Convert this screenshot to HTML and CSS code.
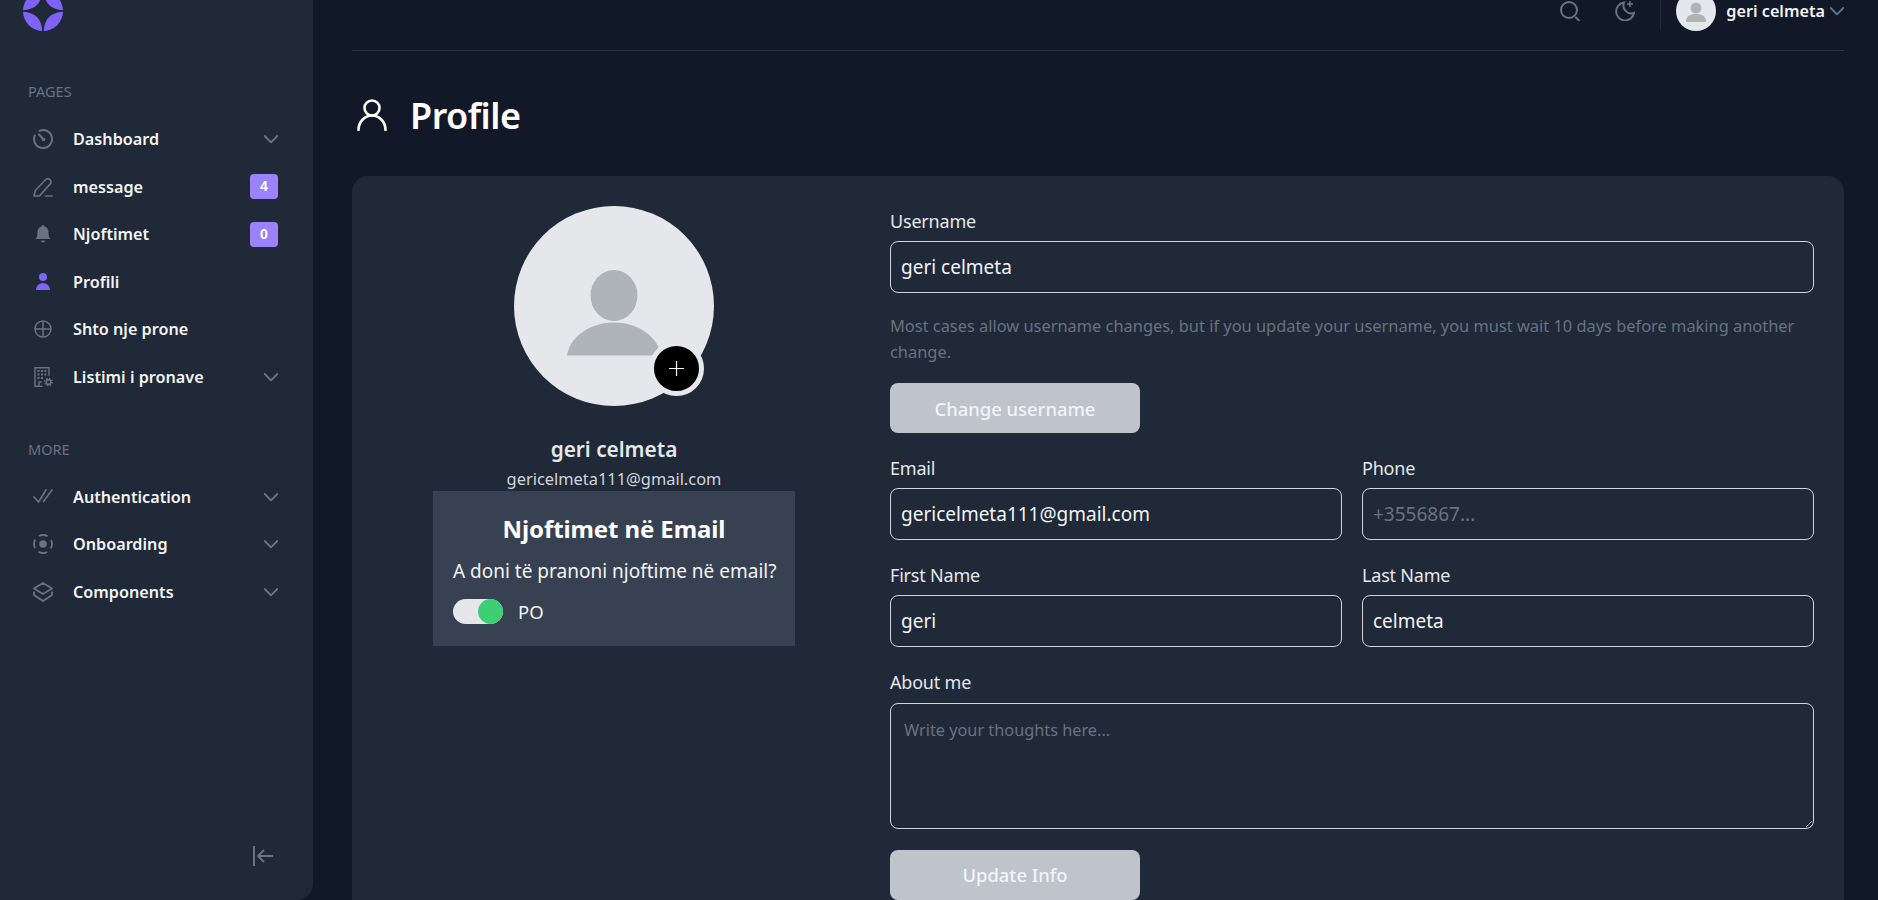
FILE: index.html
```html
<!DOCTYPE html>
<html lang="en">
<head>
    <meta charset="UTF-8">
    <meta name="viewport" content="width=device-width, initial-scale=1.0">
    <title>Profile</title>
    <link rel="stylesheet" href="styles.css">
</head>
<body>
<div class="app">
    <aside class="sidebar">
        <svg class="logo" viewBox="0 0 40 40">
            <circle cx="20" cy="20" r="20" fill="#7f62f6"/>
            <path d="M20 0C19 13 13 19 0 20C13 21 19 27 20 40C21 27 27 21 40 20C27 19 21 13 20 0Z" fill="#1f2937" stroke="#1f2937" stroke-width="1.5"/>
        </svg>

        <div class="nav-title first">PAGES</div>
        <a class="nav-item">
            <svg class="nav-icon" viewBox="0 0 20 20" fill="none" stroke="currentColor" stroke-width="2" stroke-linecap="round"><path d="M6.500 1.800A9 9 0 1 1 1.800 6.500"/><path d="M6 5.500l4.500 5"/><circle cx="10.500" cy="10.500" r="1.800" fill="currentColor" stroke="none"/></svg>
            <span class="nav-text">Dashboard</span>
            <svg class="chevron" viewBox="0 0 14 14"><path d="M.7 4L7 10.300 13.300 4"/></svg>
        </a>
        <a class="nav-item">
            <svg class="nav-icon" viewBox="0 0 20 20" fill="none" stroke="currentColor" stroke-width="1.600" stroke-linecap="round" stroke-linejoin="round"><path d="M1 19l1.300-5.500L12.800 2.500a2.800 2.800 0 0 1 4 0l.4.4a2.800 2.800 0 0 1 0 4L6.500 19z"/><path d="M12.500 19h6.500"/></svg>
            <span class="nav-text">message</span>
            <span class="badge">4</span>
        </a>
        <a class="nav-item">
            <svg class="nav-icon" viewBox="0 0 20 20" fill="currentColor"><path d="M10 1a1.400 1.400 0 0 1 1.400 1.500C14 3.200 15.500 5.500 15.500 8.300c0 4 .9 5.700 1.900 6.700H2.600c1-1 1.900-2.700 1.900-6.700C4.500 5.500 6 3.200 8.600 2.500A1.400 1.400 0 0 1 10 1z"/><path d="M8 16.500h4a2 2 0 0 1-4 0z"/></svg>
            <span class="nav-text">Njoftimet</span>
            <span class="badge">0</span>
        </a>
        <a class="nav-item">
            <svg class="nav-icon purple" viewBox="0 0 20 20" fill="currentColor"><circle cx="10" cy="5" r="4"/><path d="M3 18c0-4 3-7 7-7s7 3 7 7z"/></svg>
            <span class="nav-text">Profili</span>
        </a>
        <a class="nav-item">
            <svg class="nav-icon" viewBox="0 0 20 20" fill="none" stroke="currentColor" stroke-width="1.500"><circle cx="10" cy="10" r="8"/><path d="M10 2v16M2 10h16"/></svg>
            <span class="nav-text">Shto nje prone</span>
        </a>
        <a class="nav-item">
            <svg class="nav-icon" viewBox="0 0 20 20" fill="none" stroke="currentColor" stroke-width="1.400"><path d="M9.500 19.300H2V.7h14v8"/><path d="M6 19v-4h3" /><path d="M4.500 4h2M8 4h2M11.500 4h2M4.500 7.500h2M8 7.500h2M11.500 7.500h2M4.500 11h2M8 11h2" stroke-width="2.200"/><circle cx="15.500" cy="15" r="2.400" stroke-width="1.600"/><circle cx="15.500" cy="15" r="3.800" stroke-width="1.200" stroke-dasharray="1.500 1.480"/></svg>
            <span class="nav-text">Listimi i pronave</span>
            <svg class="chevron" viewBox="0 0 14 14"><path d="M.7 4L7 10.300 13.300 4"/></svg>
        </a>

        <div class="nav-title">MORE</div>
        <a class="nav-item">
            <svg class="nav-icon" viewBox="0 0 20 20" fill="none" stroke="currentColor" stroke-width="1.700" stroke-linecap="round" stroke-linejoin="round"><path d="M1 10l4.500 5L13 3"/><path d="M10.500 14.500L19 3"/></svg>
            <span class="nav-text">Authentication</span>
            <svg class="chevron" viewBox="0 0 14 14"><path d="M.7 4L7 10.300 13.300 4"/></svg>
        </a>
        <a class="nav-item">
            <svg class="nav-icon" viewBox="0 0 20 20" fill="none" stroke="currentColor" stroke-width="1.800"><circle cx="10" cy="10" r="3.800" fill="currentColor" stroke="none"/><circle cx="10" cy="10" r="9" stroke-dasharray="9 5.140" stroke-dashoffset="4.500"/></svg>
            <span class="nav-text">Onboarding</span>
            <svg class="chevron" viewBox="0 0 14 14"><path d="M.7 4L7 10.300 13.300 4"/></svg>
        </a>
        <a class="nav-item">
            <svg class="nav-icon" viewBox="0 0 20 20" fill="none" stroke="currentColor" stroke-width="1.800" stroke-linejoin="round"><path d="M10 1l9 5.500-9 5.500-9-5.500z"/><path d="M1 9.500v3.500l9 6 9-6V9.500" /></svg>
            <span class="nav-text">Components</span>
            <svg class="chevron" viewBox="0 0 14 14"><path d="M.7 4L7 10.300 13.300 4"/></svg>
        </a>

        <svg class="collapse" viewBox="0 0 20 20" fill="none" stroke="currentColor" stroke-width="2"><path d="M1 0v20"/><path d="M20 10H6M11 4l-6 6 6 6"/></svg>
    </aside>

    <main class="main">
        <header class="topbar">
            <svg class="top-icon" viewBox="0 0 20 20" fill="none" stroke="currentColor" stroke-width="2" stroke-linecap="round"><circle cx="9" cy="9" r="8"/><path d="M16 16.500l3 3"/></svg>
            <svg class="top-icon moon" viewBox="0 0 20 20" fill="none" stroke="currentColor" stroke-width="2"><path d="M9 1.500A9 9 0 1 0 19 12 8 8 0 0 1 9 1.500z"/><path d="M15 0v6M12 3h6" stroke-width="1.500"/></svg>
            <span class="top-divider"></span>
            <span class="top-avatar">
                <svg viewBox="0 0 40 40"><circle cx="20" cy="17" r="5.500" fill="#afb4b8"/><path d="M10 31c0-6 4-8 10-8s10 2 10 8z" fill="#afb4b8"/></svg>
            </span>
            <span class="top-name">geri celmeta</span>
            <svg class="chevron top-chevron" viewBox="0 0 14 14"><path d="M.7 4L7 10.300 13.300 4"/></svg>
        </header>

        <div class="page-title">
            <svg viewBox="0 0 30 32" fill="none" stroke="#fff" stroke-width="2.600" stroke-linecap="round"><circle cx="15" cy="9" r="7.500"/><path d="M1.500 31c0-8 6-14.500 13.500-14.500S28.500 23 28.500 31"/></svg>
            <h1>Profile</h1>
        </div>

        <section class="card">
            <div class="left-col">
                <div class="avatar">
                    <svg class="avatar-person" viewBox="0 0 94 86"><ellipse cx="47" cy="25.500" rx="23.500" ry="25.500" fill="#afb4b8"/><path d="M0 85.500C3 66 24 52.500 47 52.500S91 66 94 85.500z" fill="#afb4b8"/></svg>
                    <button class="avatar-add" type="button">
                        <svg viewBox="0 0 16 16" fill="none" stroke="#fff" stroke-width="1.300"><path d="M8 0v16M0 8h16"/></svg>
                    </button>
                </div>
                <h2 class="user-name">geri celmeta</h2>
                <p class="user-mail">gericelmeta111@gmail.com</p>
                <div class="notify-box">
                    <h3>Njoftimet në Email</h3>
                    <p>A doni të pranoni njoftime në email?</p>
                    <div class="toggle-row">
                        <span class="toggle"><span class="toggle-thumb"></span></span>
                        <span>PO</span>
                    </div>
                </div>
            </div>

            <form class="right-col">
                <label for="username">Username</label>
                <input type="text" id="username" value="geri celmeta">
                <p class="hint">Most cases allow username changes, but if you update your username, you must wait 10 days before making another change.</p>
                <button class="soft-btn" type="button">Change username</button>

                <div class="two-col row-email">
                    <div>
                        <label for="email">Email</label>
                        <input type="text" id="email" value="gericelmeta111@gmail.com">
                    </div>
                    <div>
                        <label for="phone">Phone</label>
                        <input type="text" id="phone" placeholder="+3556867...">
                    </div>
                </div>
                <div class="two-col row-name">
                    <div>
                        <label for="first">First Name</label>
                        <input type="text" id="first" value="geri">
                    </div>
                    <div>
                        <label for="last">Last Name</label>
                        <input type="text" id="last" value="celmeta">
                    </div>
                </div>

                <label class="about-label" for="about">About me</label>
                <textarea id="about" placeholder="Write your thoughts here..."></textarea>
                <button class="soft-btn update-btn" type="button">Update Info</button>
            </form>
        </section>
    </main>
</div>
</body>
</html>
```

FILE: styles.css
```css
* {
    box-sizing: border-box;
}

html, body {
    margin: 0;
    height: 100%;
    overflow: hidden;
}

body {
    background-color: #111827;
    color: #e5e7eb;
    font-family: "Noto Sans", Arial, sans-serif;
    font-size: 16px;
}

h1, h2, h3, p {
    margin: 0;
}

.app {
    display: flex;
    height: 900px;
    overflow: hidden;
}

/* sidebar */
.sidebar {
    display: flex;
    flex-direction: column;
    flex: 0 0 313px;
    height: 909px;
    margin-top: -9px;
    padding: 0 35px 34px 28px;
    background-color: #1f2937;
    border-bottom-right-radius: 16px;
}

.logo {
    flex: none;
    width: 40px;
    height: 40px;
    margin-left: -5px;
}

.nav-title {
    height: 20px;
    margin: 37.7px 0 14.3px;
    color: #6b7280;
    font-size: 14.5px;
    line-height: 20px;
}

.nav-title.first {
    margin-top: 50px;
}

.nav-item {
    display: flex;
    align-items: center;
    flex: none;
    height: 47.6px;
    padding-left: 5px;
    color: #f3f4f6;
    font-size: 16.2px;
    font-weight: 600;
    line-height: 24px;
}

.nav-icon {
    flex: none;
    width: 20px;
    height: 20px;
    color: #6b7280;
}

.nav-icon.purple {
    color: #7f62f6;
}

.nav-text {
    margin-left: 20px;
}

.chevron {
    flex: none;
    width: 14px;
    height: 14px;
    margin-left: auto;
    fill: none;
    stroke: #6b7280;
    stroke-width: 1.9;
    stroke-linecap: round;
    stroke-linejoin: round;
}

.badge {
    margin-left: auto;
    min-width: 28px;
    height: 25px;
    border-radius: 4px;
    background-color: #9a82fb;
    color: #fff;
    font-family: "Liberation Sans", Arial, sans-serif;
    font-size: 14px;
    font-weight: 700;
    line-height: 25px;
    text-align: center;
}

.collapse {
    flex: none;
    align-self: flex-end;
    width: 20px;
    height: 20px;
    margin: auto 5px 0 0;
    color: #6b7280;
}

/* top bar */
.main {
    flex: 1;
    min-width: 0;
    padding: 0 34px 0 39px;
}

.topbar {
    display: flex;
    align-items: center;
    height: 60px;
    margin-top: -9px;
    padding-bottom: 19px;
    border-bottom: 1px solid #2a3442;
}

.top-icon {
    flex: none;
    width: 20px;
    height: 20px;
    margin-left: auto;
    color: #6b7280;
}

.top-icon.moon {
    margin-left: 35px;
}

.top-divider {
    flex: none;
    width: 1px;
    height: 35px;
    margin: 0 15px 0 25px;
    background-color: #1f2937;
}

.top-avatar {
    flex: none;
    width: 40px;
    height: 40px;
    border-radius: 50%;
    background-color: #e5e7eb;
}

.top-avatar svg {
    display: block;
    width: 40px;
    height: 40px;
}

.top-name {
    margin-left: 10px;
    color: #f3f4f6;
    font-size: 16.2px;
    font-weight: 600;
}

.top-chevron {
    margin-left: 5px;
}

.page-title {
    display: flex;
    align-items: center;
    height: 70px;
    margin: 29px 0 26px;
    padding-left: 5px;
}

.page-title svg {
    width: 30px;
    height: 32px;
}

.page-title h1 {
    margin-left: 23px;
    color: #fff;
    font-size: 36px;
    font-weight: 600;
    letter-spacing: -0.5px;
}

/* card */
.card {
    display: grid;
    grid-template-columns: 462px 1fr;
    column-gap: 45px;
    min-height: 800px;
    padding: 30px 30px 0 31px;
    background-color: #1f2937;
    border-radius: 16px;
}

.left-col {
    display: flex;
    flex-direction: column;
    align-items: center;
}

.avatar {
    position: relative;
    display: flex;
    align-items: flex-start;
    justify-content: center;
    width: 200px;
    height: 200px;
    padding-top: 64px;
    border-radius: 50%;
    background-color: #e5e7eb;
}

.avatar-person {
    width: 94px;
    height: 86px;
}

.avatar-add {
    position: absolute;
    right: 10px;
    bottom: 10px;
    display: flex;
    align-items: center;
    justify-content: center;
    width: 55px;
    height: 55px;
    padding: 0;
    border: 5px solid #e5e7eb;
    border-radius: 50%;
    background-color: #000;
}

.avatar-add svg {
    width: 15px;
    height: 15px;
}

.user-name {
    height: 30px;
    margin-top: 29px;
    color: #e5e7eb;
    font-size: 20.8px;
    font-weight: 600;
    line-height: 28px;
}

.user-mail {
    height: 26px;
    color: #d1d5db;
    font-size: 16.4px;
    line-height: 28px;
}

.notify-box {
    width: 362px;
    height: 155px;
    padding: 19px 20px;
    background-color: #374151;
}

.notify-box h3 {
    color: #fff;
    font-size: 24px;
    font-weight: 700;
    line-height: 38px;
    letter-spacing: -0.1px;
    text-align: center;
}

.notify-box p {
    margin-top: 9px;
    color: #f3f4f6;
    font-size: 19px;
    line-height: 28px;
    white-space: nowrap;
}

.toggle-row {
    display: flex;
    align-items: center;
    gap: 15px;
    margin-top: 14px;
    color: #f3f4f6;
    font-size: 18.5px;
    line-height: 25px;
}

.toggle {
    display: flex;
    justify-content: flex-end;
    width: 50px;
    height: 25px;
    border-radius: 13px;
    background-color: #e5e7eb;
}

.toggle-thumb {
    width: 25px;
    height: 25px;
    border-radius: 50%;
    background-color: #3ecf74;
}

/* form */
.right-col {
    padding-top: 4px;
}

.right-col label {
    display: block;
    height: 24px;
    margin-bottom: 7px;
    color: #e5e7eb;
    font-size: 18px;
    line-height: 22px;
    letter-spacing: -0.2px;
}

input,
textarea {
    display: block;
    width: 100%;
    border: 1px solid #d1d5db;
    border-radius: 8px;
    background-color: transparent;
    color: #f3f4f6;
    font-family: inherit;
    font-size: 19px;
    outline: none;
}

input {
    height: 51.5px;
    padding: 0 10px;
}

textarea {
    height: 126px;
    padding: 15px 13px;
    font-size: 16.3px;
}

input::placeholder,
textarea::placeholder {
    color: #6b7280;
    opacity: 1;
}

.hint {
    margin-top: 20.5px;
    color: #6b7280;
    font-size: 16.4px;
    line-height: 26px;
}

.soft-btn {
    display: block;
    width: 250px;
    height: 50px;
    margin-top: 18px;
    border: none;
    border-radius: 8px;
    background-color: #bfc3cc;
    color: #f3f4f6;
    font-family: inherit;
    font-size: 18.4px;
    font-weight: 500;
}

.two-col {
    display: grid;
    grid-template-columns: 1fr 1fr;
    column-gap: 20px;
}

.row-email {
    margin-top: 24px;
}

.row-name {
    margin-top: 24.5px;
}

.right-col .about-label {
    margin-top: 24px;
    margin-bottom: 8px;
}

.update-btn {
    margin-top: 21px;
}
```
